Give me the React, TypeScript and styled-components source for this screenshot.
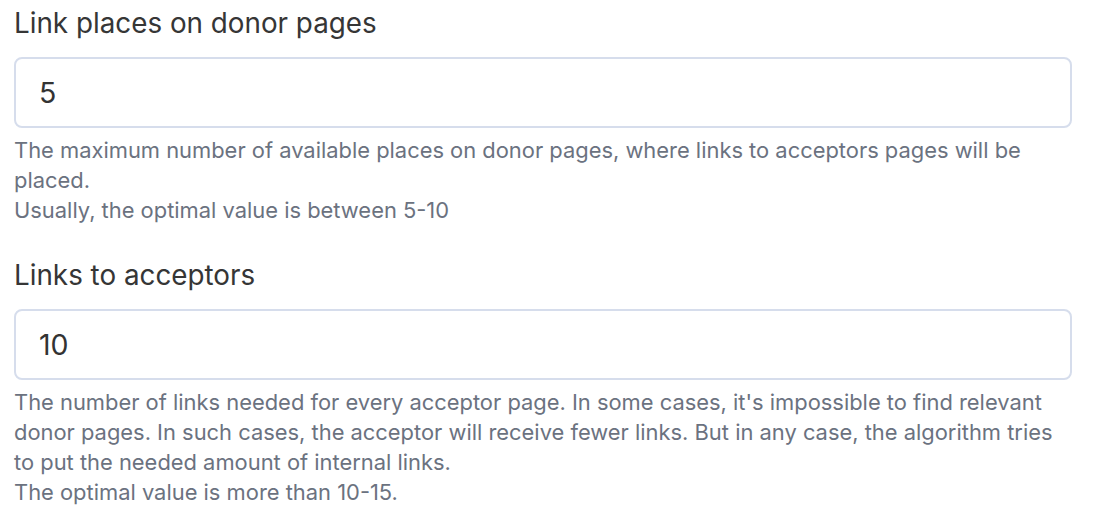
import styled, { createGlobalStyle } from "styled-components";

const GlobalStyle = createGlobalStyle`
  body {
    margin: 0;
    background: #ffffff;
    font-family: Inter, "Noto Sans", sans-serif;
  }
`;

const Page = styled.div`
  width: 1058px;
  padding: 3px 0 0 14px;
  display: flex;
  flex-direction: column;
  gap: 30px;
`;

const Field = styled.div`
  display: flex;
  flex-direction: column;
`;

const Label = styled.label`
  font-size: 27.8px;
  line-height: 40px;
  color: #363636;
  margin-bottom: 14px;
`;

const Input = styled.input`
  box-sizing: border-box;
  width: 100%;
  height: 71px;
  padding: 0 23px;
  border: 2px solid #d6ddec;
  border-radius: 8px;
  font-family: inherit;
  font-size: 28.5px;
  color: #333333;
  outline: none;
`;

const Help = styled.p`
  margin: 7px 0 0;
  font-size: 21.9px;
  line-height: 30px;
  color: #6b7280;
`;

const App = () => {
  return (
    <>
      <GlobalStyle />
      <Page>
        <Field>
          <Label>Link places on donor pages</Label>
          <Input defaultValue="5" />
          <Help>
            The maximum number of available places on donor pages, where links to acceptors pages will be placed.
            <br />
            Usually, the optimal value is between 5-10
          </Help>
        </Field>
        <Field>
          <Label>Links to acceptors</Label>
          <Input defaultValue="10" />
          <Help>
            The number of links needed for every acceptor page. In some cases, it's impossible to find relevant donor
            pages. In such cases, the acceptor will receive fewer links. But in any case, the algorithm tries to put the
            needed amount of internal links.
            <br />
            The optimal value is more than 10-15.
          </Help>
        </Field>
      </Page>
    </>
  );
};

export default App;
